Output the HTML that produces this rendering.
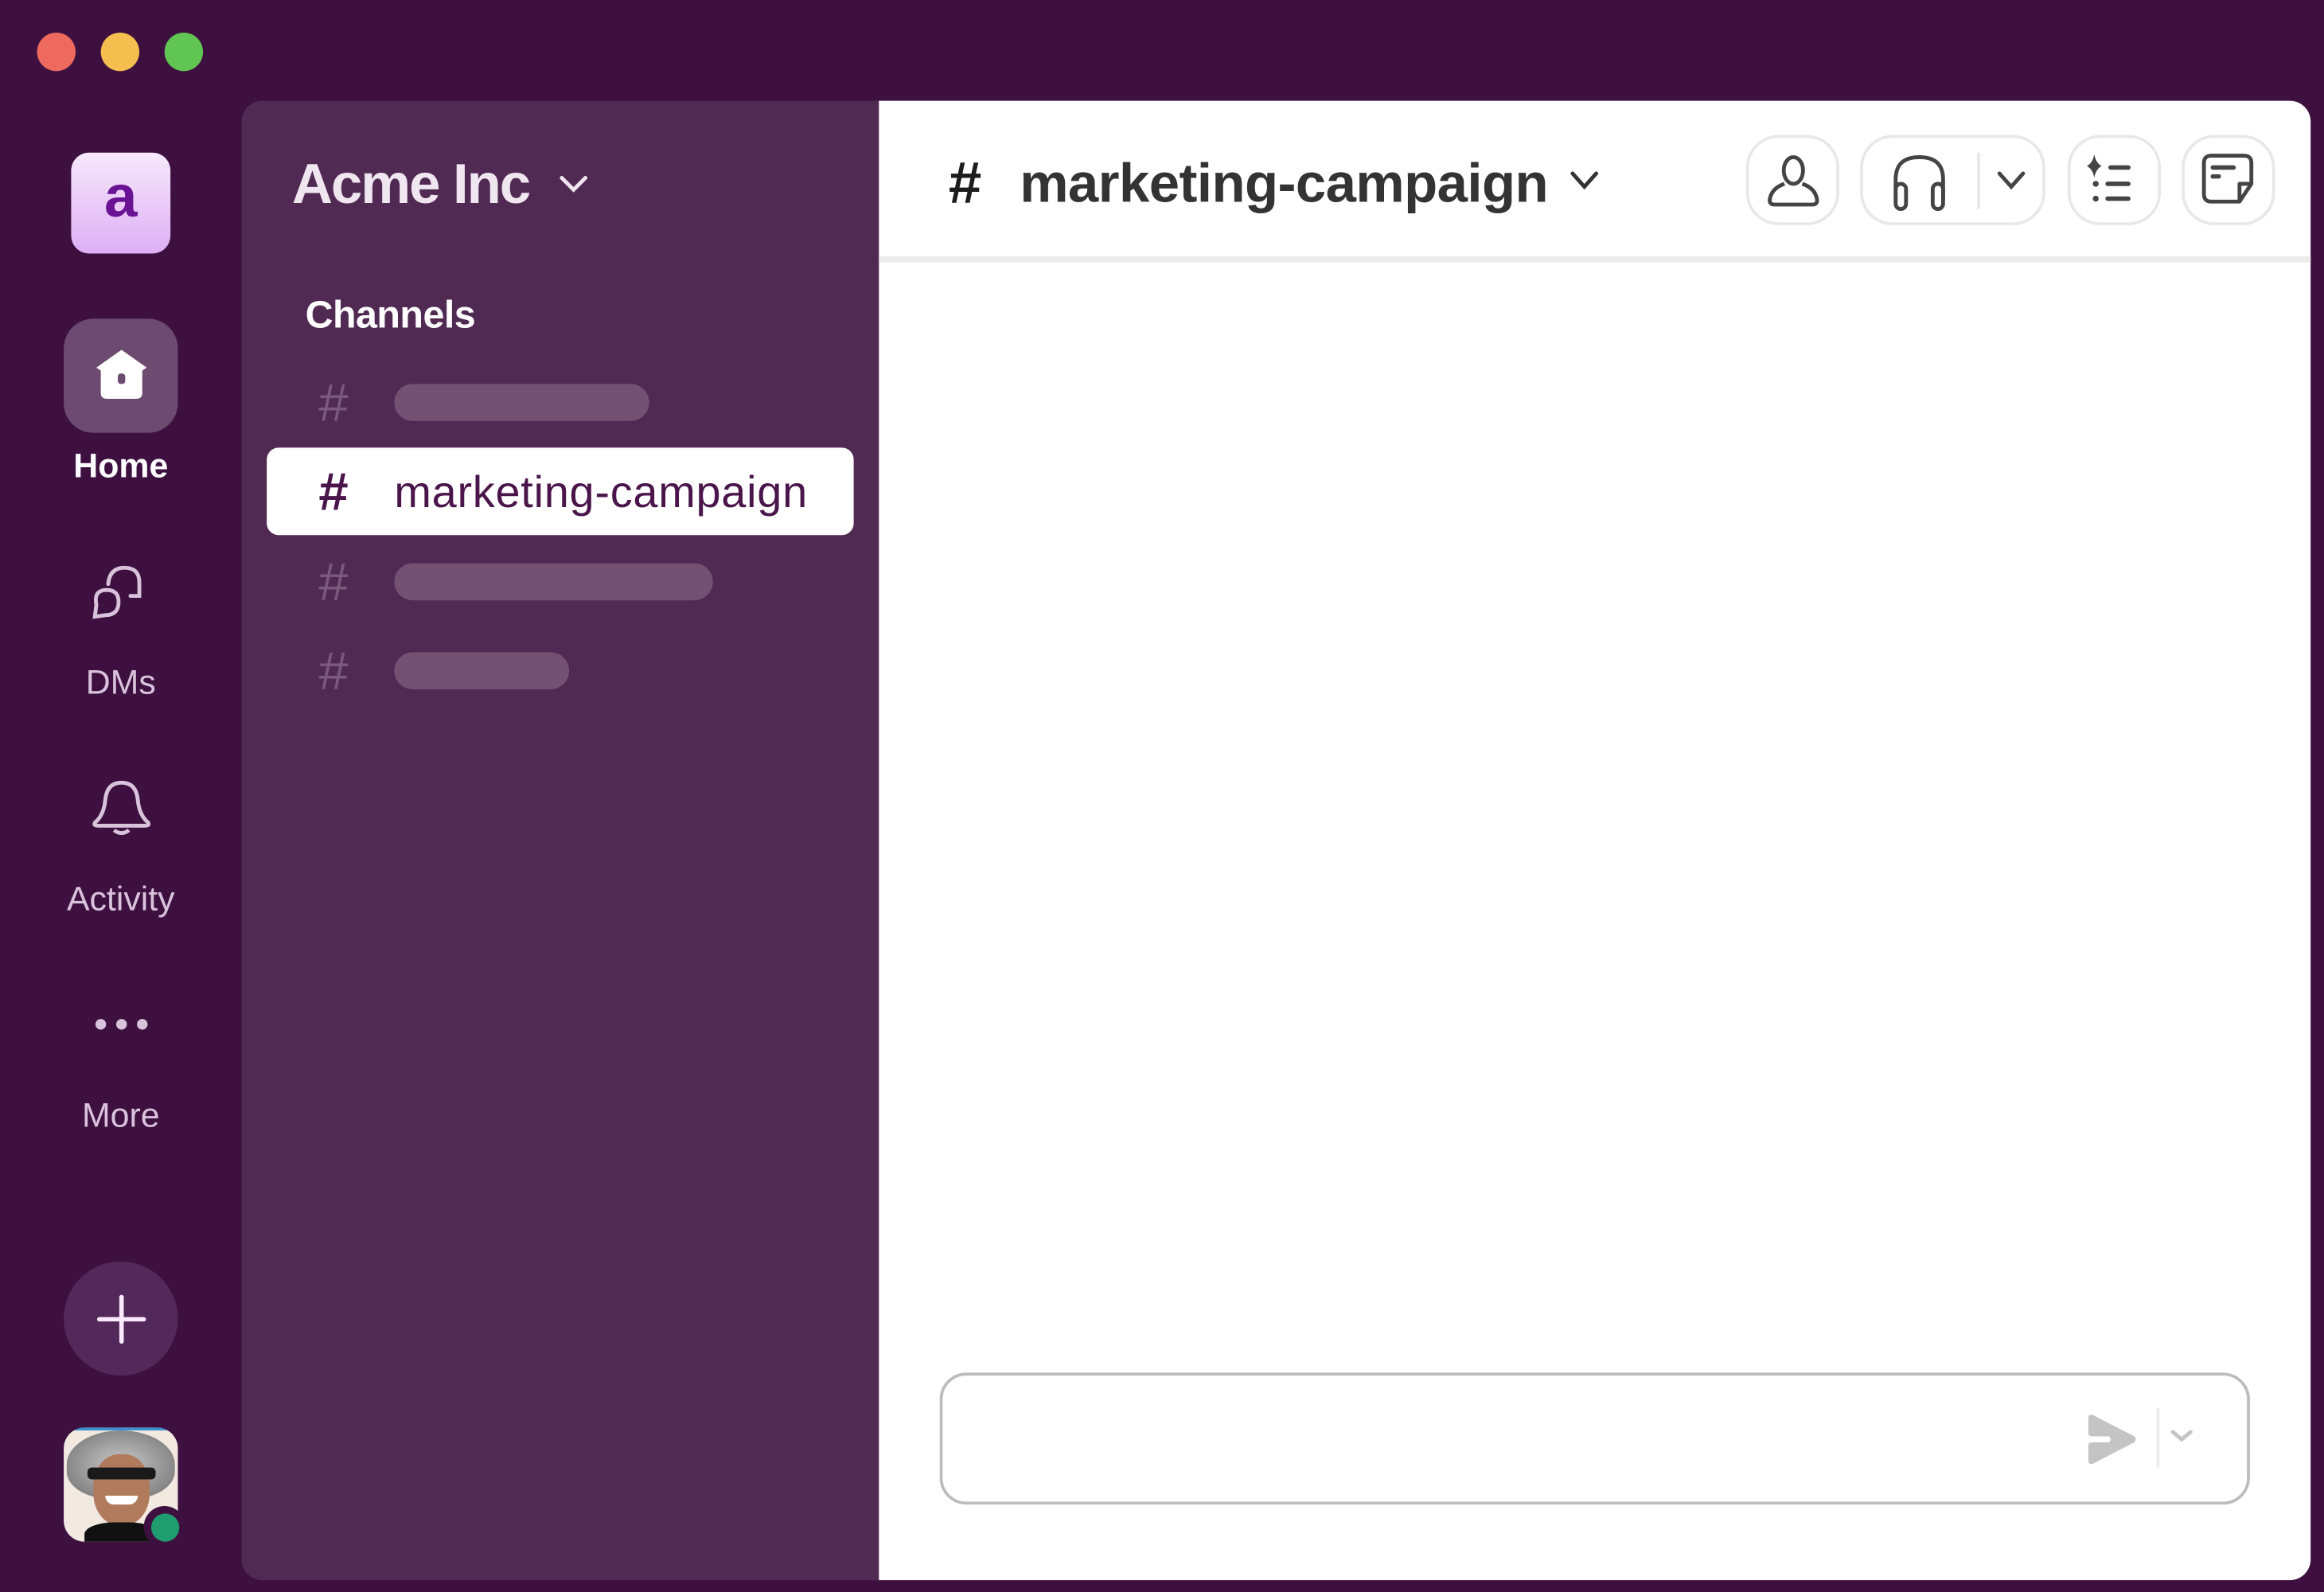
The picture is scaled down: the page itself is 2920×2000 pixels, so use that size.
<!DOCTYPE html>
<html><head><meta charset="utf-8"><style>
html,body{margin:0;padding:0;width:2920px;height:2000px;overflow:hidden;background:#3d1040}
#w{position:absolute;left:0;top:0;width:1568px;height:1074px;transform:scale(1.86224);transform-origin:0 0;font-family:"Liberation Sans",sans-serif}
.a{position:absolute}
.dot{position:absolute;width:26px;height:26px;border-radius:50%;top:22px}
.lbl{position:absolute;left:0;width:163px;text-align:center;font-size:23px;color:#d9c3db}
.bar{position:absolute;left:266px;height:25px;border-radius:13px;background:#735172}
.hs{position:absolute;left:215px;font-size:36px;color:#7a5a7c;line-height:1}
.btn{position:absolute;top:91px;height:61px;border:2px solid #e8e8e8;border-radius:22px;box-sizing:border-box}
</style></head><body><div id="w">
<div class="dot" style="left:25px;background:#ee6a5f"></div>
<div class="dot" style="left:68px;background:#f5bf4f"></div>
<div class="dot" style="left:111px;background:#61c554"></div>

<div class="a" style="left:48px;top:103px;width:67px;height:68px;border-radius:12px;background:linear-gradient(#f6e8fb,#ddb0f5)"></div>
<div class="a" style="left:48px;top:103px;width:67px;height:60px;text-align:center;font-size:40px;font-weight:bold;color:#6a1294;line-height:60px">a</div>

<div class="a" style="left:43px;top:215px;width:77px;height:77px;border-radius:20px;background:#6d4a70"></div>
<svg class="a" style="left:62px;top:233px" width="40" height="40" viewBox="0 0 40 40"><path d="M20 3 L37 15 L34 17 L34 32 Q34 36 30 36 L10 36 Q6 36 6 32 L6 17 L3 15 Z" fill="#fff"/><rect x="17.5" y="19" width="5" height="7" rx="2" fill="#6d4a70"/></svg>
<div class="lbl" style="top:301px;color:#fff;font-weight:bold">Home</div>

<svg class="a" style="left:60px;top:380px" width="44" height="40" viewBox="0 0 44 40" fill="none" stroke="#d9c3db" stroke-width="2.6" stroke-linecap="round"><path d="M13 14 Q14 3 24 3 Q34 3 34 13 L34 22 L28 22"/><path d="M4 36 L5 28 Q3 18 12 18 Q20 18 20 26 Q20 35 11 35 Z"/></svg>
<div class="lbl" style="top:447px">DMs</div>

<svg class="a" style="left:60px;top:524px" width="44" height="42" viewBox="0 0 44 42" fill="none" stroke="#d9c3db" stroke-width="2.6" stroke-linejoin="round"><path d="M22 4 Q12 4 11 16 Q10 26 4 31 Q3 33 6 33 L38 33 Q41 33 40 31 Q34 26 33 16 Q32 4 22 4 Z"/><path d="M17 36 Q22 40 27 36"/></svg>
<div class="lbl" style="top:593px">Activity</div>

<svg class="a" style="left:60px;top:684px" width="44" height="14"><circle cx="8" cy="7" r="3.6" fill="#d9c3db"/><circle cx="22" cy="7" r="3.6" fill="#d9c3db"/><circle cx="36" cy="7" r="3.6" fill="#d9c3db"/></svg>
<div class="lbl" style="top:739px">More</div>

<div class="a" style="left:43px;top:851px;width:77px;height:77px;border-radius:50%;background:#53285a"></div>
<svg class="a" style="left:62px;top:870px" width="40" height="40"><path d="M20 5V35M5 20H35" stroke="#fbeaff" stroke-width="3" stroke-linecap="round"/></svg>

<div class="a" style="left:43px;top:963px;width:77px;height:77px;border-radius:14px;overflow:hidden;background:#f2e9e1">
 <div class="a" style="left:0;top:0;width:77px;height:2px;background:#3a8fd0"></div>
 <div class="a" style="left:2px;top:2px;width:73px;height:46px;border-radius:50% 50% 40% 40%;background:radial-gradient(#c9c9c9,#6e6e6e)"></div>
 <div class="a" style="left:20px;top:18px;width:38px;height:48px;border-radius:45%;background:#b07a5c"></div>
 <div class="a" style="left:16px;top:27px;width:46px;height:8px;border-radius:3px;background:#1a1a1a"></div>
 <div class="a" style="left:28px;top:46px;width:22px;height:6px;border-radius:0 0 10px 10px;background:#fff"></div>
 <div class="a" style="left:14px;top:64px;width:50px;height:20px;border-radius:40% 40% 0 0;background:#111"></div>
</div>
<div class="a" style="left:97px;top:1016px;width:28px;height:28px;border-radius:50%;background:#3d1040"></div>
<div class="a" style="left:102px;top:1021px;width:19px;height:19px;border-radius:50%;background:#1f9d6f"></div>

<div class="a" style="left:163px;top:68px;width:430px;height:998px;background:#512a54;border-radius:14px 0 0 14px"></div>
<div class="a" style="left:197px;top:102px;font-size:38px;font-weight:bold;color:#efe6ef;letter-spacing:-1.1px;line-height:46px">Acme Inc</div>
<svg class="a" style="left:376px;top:116px" width="22" height="16"><path d="M3 4L11 12L19 4" fill="none" stroke="#efe6ef" stroke-width="2.6" stroke-linecap="round"/></svg>
<div class="a" style="left:206px;top:197px;font-size:26px;font-weight:bold;color:#fff;letter-spacing:-0.3px">Channels</div>

<div class="hs" style="top:254px">#</div><div class="bar" style="top:259px;width:172px"></div>
<div class="a" style="left:180px;top:302px;width:396px;height:59px;border-radius:8px;background:#fff"></div>
<div class="hs" style="top:314px;color:#4a154b;font-weight:bold">#</div>
<div class="a" style="left:266px;top:314px;font-size:30px;color:#4a154b;letter-spacing:0.4px;line-height:38px">marketing-campaign</div>
<div class="hs" style="top:375px">#</div><div class="bar" style="top:380px;width:215px"></div>
<div class="hs" style="top:435px">#</div><div class="bar" style="top:440px;width:118px"></div>

<div class="a" style="left:593px;top:68px;width:966px;height:998px;background:#fff;border-radius:0 14px 14px 0"></div>
<div class="a" style="left:593px;top:173px;width:966px;height:4px;background:#ebebeb"></div>
<div class="a" style="left:640px;top:100px;font-size:40px;font-weight:bold;color:#1d1c1d;line-height:48px">#</div>
<div class="a" style="left:688px;top:100px;font-size:37px;font-weight:bold;color:#333;line-height:48px;letter-spacing:-0.3px">marketing-campaign</div>
<svg class="a" style="left:1058px;top:114px" width="22" height="16"><path d="M3 3L11 12L19 3" fill="none" stroke="#333" stroke-width="2.6" stroke-linecap="round"/></svg>

<div class="btn" style="left:1178px;width:63px"></div>
<svg class="a" style="left:1190px;top:103px" width="40" height="40" fill="none" stroke="#444" stroke-width="2.6"><ellipse cx="20" cy="12" rx="6.5" ry="9"/><path d="M14 21 Q5 24 4 32 Q4 35 7 35 L33 35 Q36 35 36 32 Q35 24 26 21"/></svg>
<div class="btn" style="left:1255px;width:125px"></div>
<div class="a" style="left:1334px;top:103px;width:2px;height:38px;background:#e8e8e8"></div>
<svg class="a" style="left:1274px;top:101px" width="44" height="44" fill="none" stroke="#444" stroke-width="2.6"><path d="M5 34 V20 Q5 5 21 5 Q37 5 37 20 V34"/><rect x="5" y="23" width="7" height="17" rx="3.5"/><rect x="30" y="23" width="7" height="17" rx="3.5"/></svg>
<svg class="a" style="left:1346px;top:114px" width="22" height="16"><path d="M3 3L11 12L19 3" fill="none" stroke="#444" stroke-width="2.6" stroke-linecap="round"/></svg>
<div class="btn" style="left:1395px;width:63px"></div>
<svg class="a" style="left:1405px;top:102px" width="44" height="40"><path d="M8 2 Q9 8 13 10 Q9 12 8 18 Q7 12 3 10 Q7 8 8 2Z" fill="#444"/><g stroke="#444" stroke-width="3" stroke-linecap="round"><path d="M19 11H31M17 22H31M17 32H31"/></g><circle cx="9" cy="22" r="2" fill="#444"/><circle cx="9" cy="32" r="2" fill="#444"/></svg>
<div class="btn" style="left:1472px;width:63px"></div>
<svg class="a" style="left:1484px;top:102px" width="40" height="40" fill="none" stroke="#444" stroke-width="2.6" stroke-linejoin="round"><path d="M8 3 H30 Q35 3 35 8 V22 L27 34 H8 Q3 34 3 29 V8 Q3 3 8 3Z"/><path d="M35 22 H27 V34"/><path d="M9 11H23M9 17H13" stroke-linecap="round" stroke-width="3"/></svg>

<div class="a" style="left:634px;top:926px;width:884px;height:89px;border:2px solid #bcbcbc;border-radius:18px;box-sizing:border-box"></div>
<svg class="a" style="left:1405px;top:952px" width="38" height="38"><path d="M4 5 Q4 1 8 3 L35 17 Q37 19 35 21 L8 35 Q4 37 4 33 L4 23 Q4 21 7 21 L18 21 Q20 19 18 17 L7 17 Q4 17 4 15Z" fill="#c4c4c4"/></svg>
<div class="a" style="left:1455px;top:950px;width:2px;height:40px;background:#ededed"></div>
<svg class="a" style="left:1463px;top:962px" width="18" height="14"><path d="M3 4L9 9L15 4" fill="none" stroke="#c4c4c4" stroke-width="2.6" stroke-linecap="round"/></svg>
</div></body></html>
